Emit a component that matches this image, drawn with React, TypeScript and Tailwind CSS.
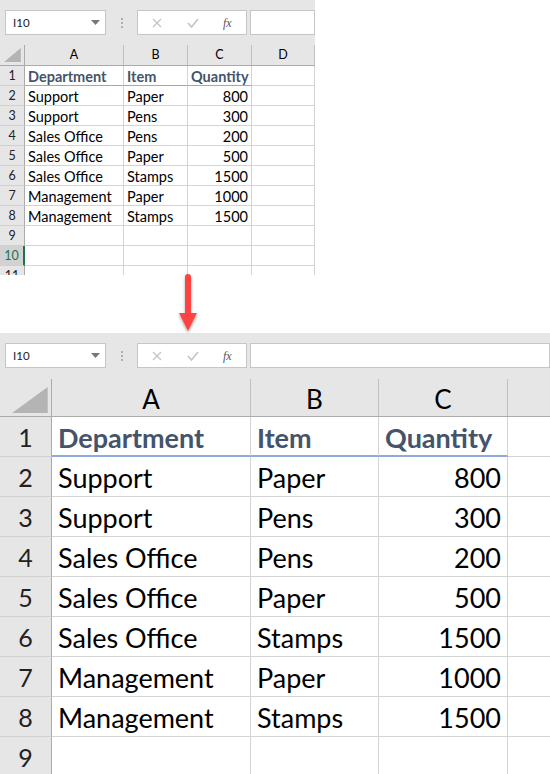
type Cfg = {
  wrap: string;
  header: string;
  rowH: string;
  rh: string;
  rhText: string;
  cols: string[];
  letters: string[];
  colText: string;
  cellText: string;
  headCell: string;
  blue: string;
  rows: number;
};

const data = [
  ["Department", "Item", "Quantity"],
  ["Support", "Paper", "800"],
  ["Support", "Pens", "300"],
  ["Sales Office", "Pens", "200"],
  ["Sales Office", "Paper", "500"],
  ["Sales Office", "Stamps", "1500"],
  ["Management", "Paper", "1000"],
  ["Management", "Stamps", "1500"],
];

const small: Cfg = {
  wrap: "w-[315px] h-[275px]",
  header: "h-[21px] mt-[10px]",
  rowH: "h-[20px]",
  rh: "w-[25px]",
  rhText: "text-[12.5px] pt-[1px]",
  cols: ["w-[99px]", "w-[64px]", "w-[64px]", "w-[63px]"],
  letters: ["A", "B", "C", "D"],
  colText: "text-[12.5px] pt-[1px]",
  cellText: "text-[14.5px] px-[3px] pt-[2px]",
  headCell: "text-[14.5px] px-[3px] pt-[2px]",
  blue: "border-b-[1.5px] border-b-[#8ea9db]",
  rows: 11,
};

// 200% zoom copy: column D runs off the right edge, so its letter is not shown
const big: Cfg = {
  wrap: "w-[550px] h-[441px]",
  header: "h-[38px] mt-[11px]",
  rowH: "h-[40px]",
  rh: "w-[52px]",
  rhText: "text-[25px] pt-[3px]",
  cols: ["w-[199px]", "w-[128px]", "w-[129px]", "w-[120px]"],
  letters: ["A", "B", "C", ""],
  colText: "text-[26px] pt-[3px]",
  cellText: "text-[27px] px-[6px] pt-[4px]",
  headCell: "text-[27px] px-[6px] pt-[4px]",
  blue: "border-b-2 border-b-[#8ea9db]",
  rows: 9,
};

const FormulaBar = () => (
  <div className="flex items-center pt-[10px] h-[35px]">
    <div className="ml-[5px] w-[101px] h-[25px] bg-white border border-[#c6c6c6] flex items-center justify-between pl-[7px] pr-[5px]">
      <span className="text-[11.5px] text-[#222]">I10</span>
      <svg width="9" height="5" viewBox="0 0 9 5"><path d="M0 0h9L4.5 5z" fill="#777" /></svg>
    </div>
    <div className="w-[31px] flex flex-col items-center gap-[2px]">
      <span className="w-[2px] h-[2px] bg-[#b0b0b0]" />
      <span className="w-[2px] h-[2px] bg-[#b0b0b0]" />
      <span className="w-[2px] h-[2px] bg-[#b0b0b0]" />
    </div>
    <div className="w-[110px] h-[25px] bg-white border border-[#c6c6c6] flex items-center">
      <svg className="ml-[14px]" width="10" height="10" viewBox="0 0 10 10"><path d="M1 1l8 8M9 1l-8 8" stroke="#c4c4c4" strokeWidth="1.3" /></svg>
      <svg className="ml-[25px]" width="12" height="10" viewBox="0 0 12 10"><path d="M1 5l3.5 4L11 1" stroke="#c4c4c4" strokeWidth="1.6" fill="none" /></svg>
      <span className="ml-[24px] text-[12px] italic text-[#555] font-['Liberation_Serif',serif]">fx</span>
    </div>
    <div className="ml-[3px] flex-1 h-[25px] bg-white border border-[#c6c6c6]" />
  </div>
);

const Sheet = ({ c }: { c: Cfg }) => (
  <div className={`${c.wrap} overflow-hidden bg-white font-['Lato',sans-serif]`}>
    <div className="bg-[#e6e6e6]">
      <FormulaBar />
      <div className={`${c.header} flex border-b border-[#ababab]`}>
        <div className={`${c.rh} shrink-0 relative border-r border-[#ababab]`}>
          <svg className="absolute right-[3px] bottom-[3px] w-[70%] h-[70%]" viewBox="0 0 10 10" preserveAspectRatio="none">
            <path d="M10 0V10H0z" fill="#b4b4b4" />
          </svg>
        </div>
        {c.letters.map((l, i) => (
          <div key={i} className={`${c.cols[i]} shrink-0 flex items-center justify-center border-r border-[#c0c0c0] ${c.colText} text-black`}>
            {l}
          </div>
        ))}
      </div>
    </div>
    {Array.from({ length: c.rows }).map((_, r) => {
      const row = data[r];
      const sel = r === 9;
      return (
        <div key={r} className={`${c.rowH} flex`}>
          <div
            className={`${c.rh} shrink-0 flex items-center justify-center border-b border-[#d0d0d0] ${c.rhText} ${
              sel ? "bg-[#d2d2d2] text-[#217346] border-r-2 border-r-[#217346]" : "bg-[#e6e6e6] text-[#222] border-r border-r-[#ababab]"
            }`}
          >
            {r + 1}
          </div>
          {[0, 1, 2, 3].map((ci) => {
            const v = row && ci < 3 ? row[ci] : "";
            const head = r === 0 && ci < 3;
            return (
              <div
                key={ci}
                className={`${c.cols[ci]} shrink-0 flex items-center border-r border-r-[#d4d4d4] ${
                  head ? c.blue : "border-b border-b-[#d4d4d4]"
                } ${ci === 2 && r > 0 ? "justify-end" : ""} ${head ? `${c.headCell} font-bold text-[#44546a]` : `${c.cellText} text-black`} whitespace-nowrap`}
              >
                {v}
              </div>
            );
          })}
        </div>
      );
    })}
  </div>
);

export default function App() {
  return (
    <div className="w-[550px] h-[774px] bg-white overflow-hidden">
      <Sheet c={small} />
      <div className="h-[58px] relative">
        <svg className="absolute left-[178px] -top-[1px]" width="20" height="60" viewBox="0 0 20 60">
          <defs>
            <filter id="sh" x="-50%" y="-20%" width="200%" height="140%">
              <feDropShadow dx="0" dy="2" stdDeviation="1.5" floodColor="#000" floodOpacity="0.35" />
            </filter>
          </defs>
          <g filter="url(#sh)">
            <path d="M10 3V40" stroke="#ff4343" strokeWidth="6" strokeLinecap="round" />
            <path d="M1 39h18L10 57z" fill="#ff4343" />
          </g>
        </svg>
      </div>
      <Sheet c={big} />
    </div>
  );
}
